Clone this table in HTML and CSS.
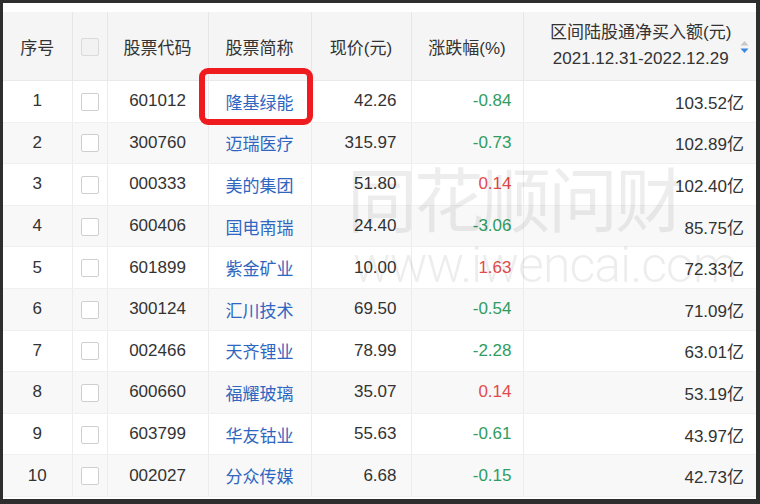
FILE: index.html
```html
<!DOCTYPE html>
<html lang="zh-CN">
<head>
    <meta charset="UTF-8">
    <meta name="viewport" content="width=device-width, initial-scale=1.0">
    <title>区间陆股通净买入额</title>
    <link rel="stylesheet" href="styles.css">
</head>
<body>
    <div class="frame">
        <table class="stock-table">
            <colgroup>
                <col class="c-no">
                <col class="c-check">
                <col class="c-code">
                <col class="c-name">
                <col class="c-price">
                <col class="c-chg">
                <col class="c-buy">
            </colgroup>
            <thead>
                <tr>
                    <th>序号</th>
                    <th><span class="box box-head"></span></th>
                    <th>股票代码</th>
                    <th>股票简称</th>
                    <th>现价(元)</th>
                    <th>涨跌幅(%)</th>
                    <th>
                        <div class="th-sort">
                            <div class="th-text">区间陆股通净买入额(元)<br>2021.12.31-2022.12.29</div>
                            <svg class="sort-icon" width="9" height="14" viewBox="0 0 9 14">
                                <path d="M4.5 1 L8.5 5.5 L0.5 5.5 Z" fill="#c8c8c8"/>
                                <path d="M4.5 13 L8.5 8.5 L0.5 8.5 Z" fill="#3b86e0"/>
                            </svg>
                        </div>
                    </th>
                </tr>
            </thead>
            <tbody>
                <tr><td>1</td><td><span class="box"></span></td><td>601012</td><td class="name">隆基绿能</td><td class="num">42.26</td><td class="num down">-0.84</td><td class="num">103.52亿</td></tr>
                <tr><td>2</td><td><span class="box"></span></td><td>300760</td><td class="name">迈瑞医疗</td><td class="num">315.97</td><td class="num down">-0.73</td><td class="num">102.89亿</td></tr>
                <tr><td>3</td><td><span class="box"></span></td><td>000333</td><td class="name">美的集团</td><td class="num">51.80</td><td class="num up">0.14</td><td class="num">102.40亿</td></tr>
                <tr><td>4</td><td><span class="box"></span></td><td>600406</td><td class="name">国电南瑞</td><td class="num">24.40</td><td class="num down">-3.06</td><td class="num">85.75亿</td></tr>
                <tr><td>5</td><td><span class="box"></span></td><td>601899</td><td class="name">紫金矿业</td><td class="num">10.00</td><td class="num up">1.63</td><td class="num">72.33亿</td></tr>
                <tr><td>6</td><td><span class="box"></span></td><td>300124</td><td class="name">汇川技术</td><td class="num">69.50</td><td class="num down">-0.54</td><td class="num">71.09亿</td></tr>
                <tr><td>7</td><td><span class="box"></span></td><td>002466</td><td class="name">天齐锂业</td><td class="num">78.99</td><td class="num down">-2.28</td><td class="num">63.01亿</td></tr>
                <tr><td>8</td><td><span class="box"></span></td><td>600660</td><td class="name">福耀玻璃</td><td class="num">35.07</td><td class="num up">0.14</td><td class="num">53.19亿</td></tr>
                <tr><td>9</td><td><span class="box"></span></td><td>603799</td><td class="name">华友钴业</td><td class="num">55.63</td><td class="num down">-0.61</td><td class="num">43.97亿</td></tr>
                <tr><td>10</td><td><span class="box"></span></td><td>002027</td><td class="name">分众传媒</td><td class="num">6.68</td><td class="num down">-0.15</td><td class="num">42.73亿</td></tr>
            </tbody>
        </table>

        <div class="watermark">
            <div class="wm-cn">同花顺问财</div>
            <div class="wm-en">www.iwencai.com</div>
        </div>

        <div class="highlight"></div>
    </div>
</body>
</html>
```

FILE: styles.css
```css
body {
    margin: 0;
    background-color: #2e2e2e;
    font-family: "Liberation Sans", Arial, "Noto Sans CJK SC", sans-serif;
    color: #333;
}
.frame {
    position: relative;
    width: 753px;
    height: 496px;
    margin: 3px 4px 5px 3px;
    padding-top: 9px;
    box-sizing: border-box;
    background-color: #fff;
    overflow: hidden;
}
.stock-table {
    width: 753px;
    border-collapse: collapse;
    table-layout: fixed;
    font-size: 17px;
}
.c-no { width: 69px; }
.c-check { width: 35px; }
.c-code { width: 101px; }
.c-name { width: 103px; }
.c-price { width: 100px; }
.c-chg { width: 112px; }
.c-buy { width: 233px; }

.stock-table th {
    height: 68px;
    padding: 0;
    background-color: #f5f5f5;
    font-weight: normal;
    color: #333;
    text-align: center;
    border-left: 1px solid #e6e6e6;
    border-bottom: 1px solid #e9e9e9;
}
.stock-table td {
    height: 40.6px;
    padding: 0;
    text-align: center;
    border-left: 1px solid #ececec;
    border-bottom: 1px solid #f0f0f0;
    color: #333;
}
.stock-table th:first-child,
.stock-table td:first-child {
    border-left: none;
}
.stock-table tbody tr:nth-child(even) td {
    background-color: #f8f8f8;
}
.stock-table td.num {
    text-align: right;
}
.stock-table td:nth-child(5) { padding-right: 14px; }
.stock-table td:nth-child(6) { padding-right: 11px; }
.stock-table td:nth-child(7) { padding-right: 12px; }
.stock-table td.name {
    color: #2f66c0;
}
.stock-table td.down {
    color: #2f9c62;
}
.stock-table td.up {
    color: #e24b4b;
}

.box {
    display: inline-block;
    width: 16px;
    height: 16px;
    border: 1px solid #cfcfcf;
    border-radius: 2px;
    background-color: #fff;
    vertical-align: middle;
}
.box-head {
    background-color: #f2f2f2;
    border-color: #dadada;
}

.th-sort {
    display: flex;
    align-items: center;
    padding-left: 18px;
}
.th-text {
    flex: 1;
    line-height: 26px;
    text-align: center;
}
.sort-icon {
    margin-right: 7px;
    margin-top: 2px;
}

.watermark {
    position: absolute;
    left: 344px;
    top: 150px;
    pointer-events: none;
    color: rgba(0, 0, 0, 0.07);
}
.wm-cn {
    font-family: "Noto Sans CJK SC", sans-serif;
    font-weight: 400;
    font-size: 70px;
    line-height: 88px;
    letter-spacing: -3px;
}
.wm-en {
    font-family: Roboto, sans-serif;
    font-weight: 300;
    font-size: 50px;
    line-height: 48px;
    letter-spacing: -1px;
    margin-left: 6px;
}

.highlight {
    position: absolute;
    left: 196px;
    top: 65px;
    width: 114px;
    height: 57px;
    box-sizing: border-box;
    border: 6px solid #ef1b1f;
    border-radius: 9px;
}
```
